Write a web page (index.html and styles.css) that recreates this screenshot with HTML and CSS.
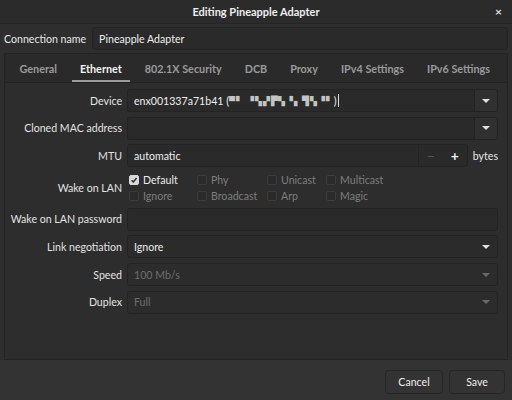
FILE: index.html
```html
<!DOCTYPE html>
<html>
<head>
<meta charset="utf-8">
<link rel="stylesheet" href="styles.css">
</head>
<body>
<div class="window">
  <div class="titlebar">
    <span class="title">Editing Pineapple Adapter</span>
    <span class="close">×</span>
  </div>
  <div class="namerow">
    <span class="namelabel">Connection name</span>
    <div class="entry nameentry">Pineapple Adapter</div>
  </div>
  <div class="notebook">
    <div class="tabs">
      <span class="tab">General</span>
      <span class="tab active">Ethernet</span>
      <span class="tab">802.1X Security</span>
      <span class="tab">DCB</span>
      <span class="tab">Proxy</span>
      <span class="tab">IPv4 Settings</span>
      <span class="tab">IPv6 Settings</span>
    </div>
    <div class="panel">
      <span class="label">Device</span>
      <div class="combo-entry">
        <div class="entry grow">enx001337a71b41 (<span class="obscured">▀▘ ▝▚▞▛▚▝▖▜▚▝▘</span>)<span class="caret"></span></div>
        <div class="arrowbtn"><span class="tri"></span></div>
      </div>

      <span class="label">Cloned MAC address</span>
      <div class="combo-entry">
        <div class="entry grow"></div>
        <div class="arrowbtn"><span class="tri"></span></div>
      </div>

      <span class="label">MTU</span>
      <div class="mturow">
        <div class="spin">
          <div class="entry grow">automatic</div>
          <span class="spinbtn dim">−</span>
          <span class="spinbtn">+</span>
        </div>
        <span class="unit">bytes</span>
      </div>

      <span class="label">Wake on LAN</span>
      <div class="checks">
        <span class="chk"><span class="box checked"><svg width="10" height="10" viewBox="0 0 10 10"><path d="M2 5.2 L4.2 7.4 L8.2 2.6" fill="none" stroke="#2b2b2b" stroke-width="1.8"/></svg></span><span class="ctext on">Default</span></span>
        <span class="chk"><span class="box"></span><span class="ctext">Phy</span></span>
        <span class="chk"><span class="box"></span><span class="ctext">Unicast</span></span>
        <span class="chk"><span class="box"></span><span class="ctext">Multicast</span></span>
        <span class="chk"><span class="box"></span><span class="ctext">Ignore</span></span>
        <span class="chk"><span class="box"></span><span class="ctext">Broadcast</span></span>
        <span class="chk"><span class="box"></span><span class="ctext">Arp</span></span>
        <span class="chk"><span class="box"></span><span class="ctext">Magic</span></span>
      </div>

      <span class="label">Wake on LAN password</span>
      <div class="entry"></div>

      <span class="label">Link negotiation</span>
      <div class="combo"><span>Ignore</span><span class="tri"></span></div>

      <span class="label">Speed</span>
      <div class="combo disabled"><span>100 Mb/s</span><span class="tri"></span></div>

      <span class="label">Duplex</span>
      <div class="combo disabled"><span>Full</span><span class="tri"></span></div>
    </div>
  </div>
  <div class="footer">
    <button class="btn cancel">Cancel</button>
    <button class="btn save">Save</button>
  </div>
</div>
</body>
</html>
```
FILE: styles.css
```css
* { box-sizing: border-box; }
html, body { margin: 0; padding: 0; }
body {
  width: 512px;
  height: 400px;
  background: #2f2f2f;
  font-family: Lato, "Noto Sans", sans-serif;
  font-size: 10.6px;
  color: #e8e8e8;
  overflow: hidden;
}
.window {
  width: 512px;
  height: 400px;
  display: flex;
  flex-direction: column;
  background: #2e2e2e;
}
.titlebar {
  height: 24px;
  background: #2b2b2b;
  position: relative;
  display: flex;
  align-items: center;
  justify-content: center;
  border-bottom: 1px solid #262626;
}
.title {
  font-weight: bold;
  font-size: 11px;
  color: #eeeeee;
}
.close {
  position: absolute;
  right: 10px;
  top: 4px;
  font-size: 12px;
  font-weight: bold;
  color: #dddddd;
}
.namerow {
  display: flex;
  align-items: center;
  gap: 6px;
  padding: 3px 4px 3px 4px;
  height: 29px;
}
.namelabel { color: #e6e6e6; white-space: nowrap; }
.entry {
  height: 23px;
  background: #2a2a2a;
  border: 1px solid #232323;
  border-radius: 3px;
  display: flex;
  align-items: center;
  padding: 0 6px;
  color: #eeeeee;
  white-space: nowrap;
}
.nameentry { flex: 1; height: 23px; padding-left: 6px; }
.notebook {
  margin: 0 4px;
  height: 307px;
  border: 1px solid #232323;
  display: flex;
  flex-direction: column;
  background: #2d2d2d;
}
.tabs {
  height: 29px;
  display: flex;
  align-items: center;
  padding-left: 3px;
  background: #2a2a2a;
  border-bottom: 1px solid #232323;
}
.tab {
  font-weight: bold;
  font-size: 10.8px;
  color: #9a9a9a;
  padding: 0 8px;
  margin: 0 3.5px;
  height: 100%;
  display: flex;
  align-items: center;
  position: relative;
  white-space: nowrap;
}
.tab.active { color: #f2f2f2; }
.tab.active::after {
  content: "";
  position: absolute;
  left: 0;
  right: 0;
  bottom: 0;
  height: 2px;
  background: #9c9c9c;
}
.panel {
  flex: 1;
  display: grid;
  grid-template-columns: 117px 1fr;
  grid-template-rows: 23px 23px 23px 31px 23px 23px 23px 23px;
  column-gap: 5px;
  row-gap: 4.7px;
  padding: 6px 9px 0 0;
  align-items: center;
}
.label {
  text-align: right;
  color: #e2e2e2;
  white-space: nowrap;
}
.combo-entry {
  display: flex;
  height: 23px;
}
.combo-entry .entry {
  border-radius: 3px 0 0 3px;
  border-right: none;
}
.grow { flex: 1; }
.arrowbtn {
  width: 24px;
  height: 23px;
  background: #303030;
  border: 1px solid #232323;
  border-radius: 0 3px 3px 0;
  display: flex;
  align-items: center;
  justify-content: center;
}
.tri {
  width: 0;
  height: 0;
  border-left: 4px solid transparent;
  border-right: 4px solid transparent;
  border-top: 4px solid #e0e0e0;
}
.obscured {
  color: #c4c4c4;
  font-size: 8.5px;
  letter-spacing: 0.9px;
}
.caret {
  display: inline-block;
  width: 1px;
  height: 13px;
  background: #e0e0e0;
  margin-left: 1px;
}
.mturow {
  display: flex;
  align-items: center;
  gap: 5px;
}
.spin {
  flex: 1;
  display: flex;
  height: 23px;
  background: #2a2a2a;
  border: 1px solid #232323;
  border-radius: 3px;
}
.spin .entry {
  border: none;
  border-right: 1px solid #232323;
  border-radius: 3px 0 0 3px;
  height: 21px;
}
.spinbtn {
  width: 24px;
  display: flex;
  align-items: center;
  justify-content: center;
  font-size: 14px;
  font-weight: bold;
  color: #eeeeee;
}
.spinbtn.dim { color: #555555; font-weight: normal; }
.unit { color: #e6e6e6; }
.checks {
  display: grid;
  grid-template-columns: 68px 70px 59px 1fr;
  row-gap: 1px;
  padding-left: 2px;
}
.chk {
  display: flex;
  align-items: center;
  gap: 4px;
  height: 15px;
}
.box {
  width: 10px;
  height: 10px;
  border: 1px solid #3c3c3c;
  background: #2a2a2a;
  border-radius: 2px;
  display: flex;
  align-items: center;
  justify-content: center;
}
.box.checked {
  background: #d8d8d8;
  border-color: #d8d8d8;
}
.ctext { color: #7d7d7d; }
.ctext.on { color: #ececec; }
.combo {
  height: 23px;
  background: #2b2b2b;
  border: 1px solid #232323;
  border-radius: 3px;
  display: flex;
  align-items: center;
  justify-content: space-between;
  padding: 0 7px 0 6px;
  color: #ececec;
}
.combo.disabled { color: #6e6e6e; background: #2c2c2c; }
.combo.disabled .tri { border-top-color: #6a6a6a; }
.footer {
  flex: 1;
  background: #333333;
  display: flex;
  justify-content: flex-end;
  align-items: center;
  gap: 6px;
  padding: 4px 7px 0 0;
}
.btn {
  font-family: Lato, "Noto Sans", sans-serif;
  font-size: 10.6px;
  color: #eeeeee;
  background: #333333;
  border: 1px solid #262626;
  border-radius: 4px;
  height: 24px;
  padding: 0;
}
.cancel { width: 58px; }
.save { width: 56px; }
```
